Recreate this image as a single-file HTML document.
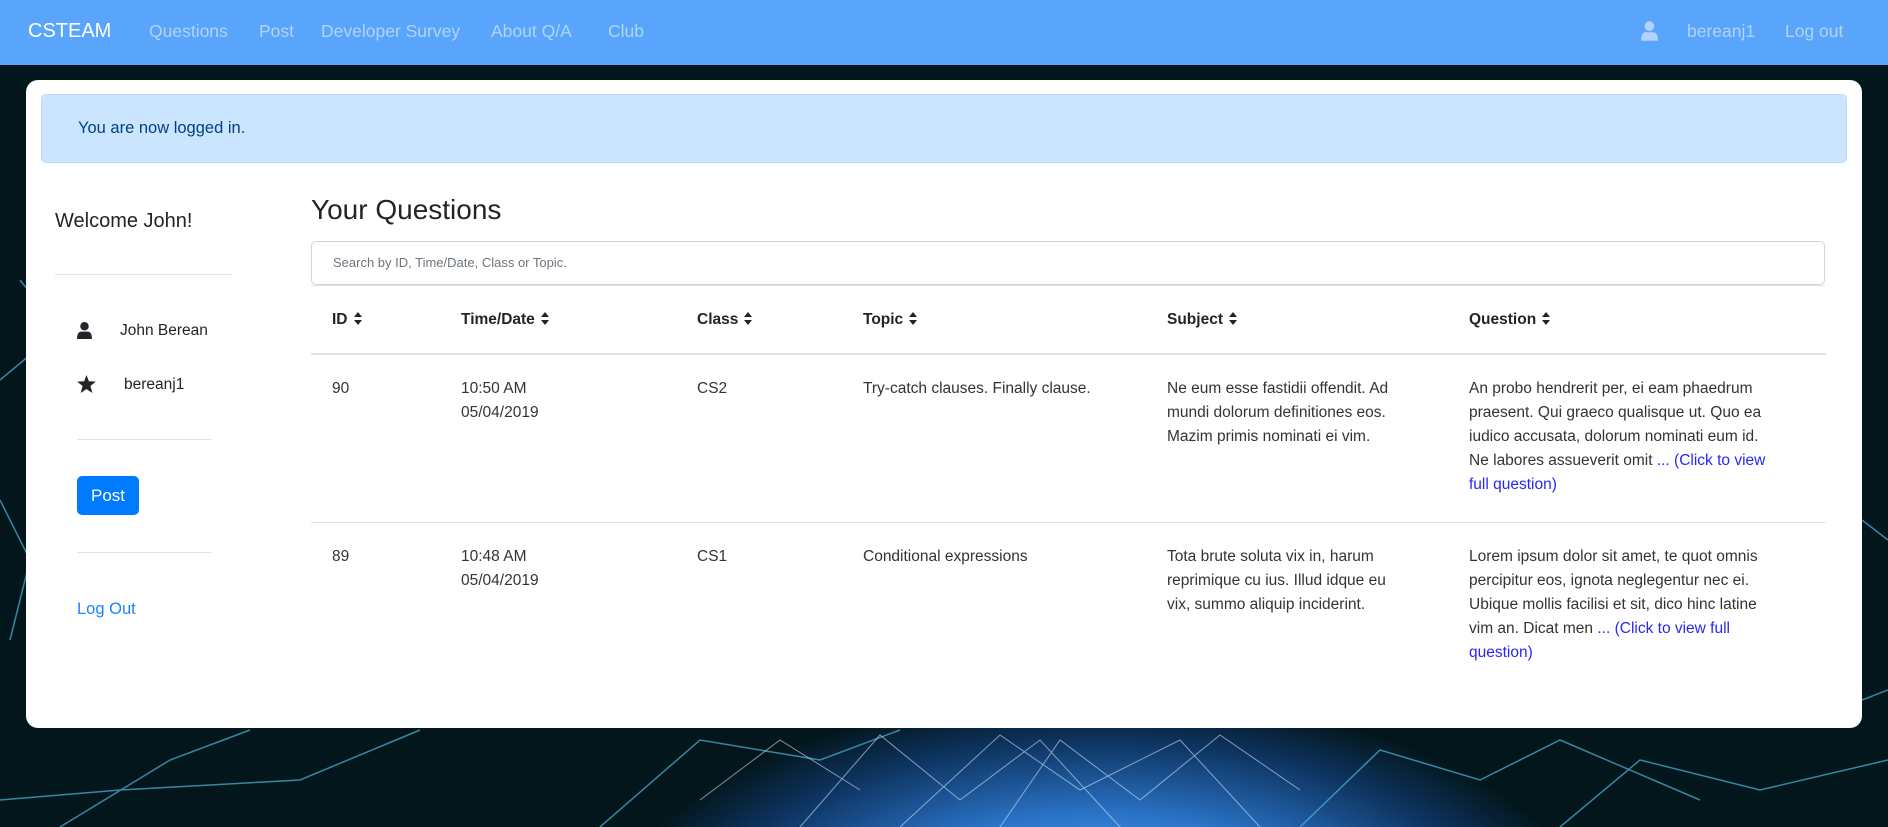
<!DOCTYPE html>
<html><head><meta charset="utf-8"><style>
*{box-sizing:border-box;margin:0;padding:0}
html,body{width:1888px;height:827px;overflow:hidden}
body{position:relative;background:#03161b;font-family:"Liberation Sans",sans-serif;color:#212529}
.bg{position:absolute;left:0;top:0;width:1888px;height:827px}
.glow{position:absolute;left:450px;top:690px;width:1300px;height:137px;background:radial-gradient(ellipse 650px 300px at 50% 230px,#6fb3f2 0%,#2b74c8 35%,rgba(20,70,140,0.6) 60%,rgba(3,22,27,0) 75%)}
.nav{position:absolute;left:0;top:0;width:1888px;height:65px;background:#5aa5fc}
.nav span{position:absolute;top:21px;font-size:17.5px;color:#b0d4fd;white-space:nowrap}
.nav .brand{left:28px;top:20px;font-size:20px;color:#fff}
.card{position:absolute;left:26px;top:80px;width:1836px;height:648px;background:#fff;border-radius:12px}
.alert{position:absolute;left:41px;top:94px;width:1806px;height:69px;background:#cce5ff;border:1px solid #b8daff;border-radius:5px}
.alert span{position:absolute;left:36px;top:24px;font-size:16.5px;color:#004085}
.t{position:absolute;white-space:nowrap;font-size:15.5px;line-height:24px;color:#333}
.hr{position:absolute;height:1px;background:#e2e2e2}
.b{font-weight:bold;color:#212529}
a{color:#2727f5;text-decoration:none}
.srt{display:inline-block;vertical-align:-1px;margin-left:6px}
</style></head><body>
<div class="glow"></div>
<svg class="bg" viewBox="0 0 1888 827">
<g stroke="#4fb6e0" stroke-width="1.5" opacity="0.7" fill="none">
<path d="M0 800 L120 790 L300 780 L420 730"/><path d="M60 827 L170 760 L250 730"/><path d="M0 380 L60 330 L20 280"/><path d="M0 500 L30 560 L10 640"/><path d="M1862 520 L1888 540"/><path d="M1862 700 L1888 690"/>
<path d="M600 827 L700 740 L820 760 L900 730"/><path d="M1300 827 L1380 750 L1480 780 L1560 740 L1700 800"/><path d="M1560 827 L1640 760 L1760 790 L1888 760"/>
</g>
<g stroke="#cfe8ff" stroke-width="1" opacity="0.6" fill="none"><path d="M800 827 L880 735 L960 800 L1040 740 L1120 827 M900 827 L1000 735 L1080 790 L1180 740 L1260 827 M700 800 L780 740 L860 790 M1000 827 L1060 740 L1140 800 L1220 735 L1300 790"/></g>
</svg>
<div class="nav">
<span class="brand">CSTEAM</span>
<span style="left:149px">Questions</span>
<span style="left:259px">Post</span>
<span style="left:321px">Developer Survey</span>
<span style="left:491px">About Q/A</span>
<span style="left:608px">Club</span>
<svg style="position:absolute;left:1641px;top:21px" width="17" height="20" viewBox="0 0 14 16"><circle cx="7" cy="4" r="4" fill="#b0d4fd"/><path d="M0 16 Q0 9 4 9 L10 9 Q14 9 14 16 Z" fill="#b0d4fd"/></svg>
<span style="left:1687px">bereanj1</span>
<span style="left:1785px">Log out</span>
</div>
<div class="card"></div>
<div class="alert"><span>You are now logged in.</span></div>
<div class="t" style="left:55px;top:208px;font-size:20px;line-height:26px;color:#212529">Welcome John!</div>
<div class="hr" style="left:55px;top:274px;width:177px"></div>
<svg style="position:absolute;left:77px;top:322px" width="15" height="17" viewBox="0 0 14 16"><circle cx="7" cy="4" r="4" fill="#212529"/><path d="M0 16 Q0 9 4 9 L10 9 Q14 9 14 16 Z" fill="#212529"/></svg>
<div class="t" style="left:120px;top:319px;color:#212529">John Berean</div>
<svg style="position:absolute;left:77px;top:375px" width="19" height="18" viewBox="0 0 24 23"><path d="M12 0 L15 8 L24 8.5 L17 14 L19.5 23 L12 18 L4.5 23 L7 14 L0 8.5 L9 8 Z" fill="#212529"/></svg>
<div class="t" style="left:124px;top:373px;color:#212529">bereanj1</div>
<div class="hr" style="left:77px;top:439px;width:135px"></div>
<div style="position:absolute;left:77px;top:476px;width:62px;height:39px;background:#007bff;border-radius:5px;color:#fff;font-size:17px;line-height:39px;text-align:center">Post</div>
<div class="hr" style="left:77px;top:552px;width:135px"></div>
<div class="t" style="left:77px;top:597px;font-size:16.5px;color:#1a82ff">Log Out</div>
<div class="t" style="left:311px;top:193px;font-size:28px;line-height:34px;color:#212529">Your Questions</div>
<div style="position:absolute;left:311px;top:241px;width:1514px;height:44px;border:1px solid #ced4da;border-radius:5px"></div>
<div class="t" style="left:333px;top:251px;font-size:13px;color:#6c757d">Search by ID, Time/Date, Class or Topic.</div>
<div class="hr" style="left:311px;top:285px;width:1514px;background:#e2e5e8"></div>
<div class="t b" style="left:332px;top:308px">ID<svg class="srt" width="8" height="13" viewBox="0 0 8 13"><path d="M4 0 L8 5 L0 5Z M4 13 L8 8 L0 8Z" fill="#212529"/></svg></div>
<div class="t b" style="left:461px;top:308px">Time/Date<svg class="srt" width="8" height="13" viewBox="0 0 8 13"><path d="M4 0 L8 5 L0 5Z M4 13 L8 8 L0 8Z" fill="#212529"/></svg></div>
<div class="t b" style="left:697px;top:308px">Class<svg class="srt" width="8" height="13" viewBox="0 0 8 13"><path d="M4 0 L8 5 L0 5Z M4 13 L8 8 L0 8Z" fill="#212529"/></svg></div>
<div class="t b" style="left:863px;top:308px">Topic<svg class="srt" width="8" height="13" viewBox="0 0 8 13"><path d="M4 0 L8 5 L0 5Z M4 13 L8 8 L0 8Z" fill="#212529"/></svg></div>
<div class="t b" style="left:1167px;top:308px">Subject<svg class="srt" width="8" height="13" viewBox="0 0 8 13"><path d="M4 0 L8 5 L0 5Z M4 13 L8 8 L0 8Z" fill="#212529"/></svg></div>
<div class="t b" style="left:1469px;top:308px">Question<svg class="srt" width="8" height="13" viewBox="0 0 8 13"><path d="M4 0 L8 5 L0 5Z M4 13 L8 8 L0 8Z" fill="#212529"/></svg></div>
<div class="hr" style="left:311px;top:353px;width:1515px;height:2px;background:#dee2e6"></div>
<div class="t" style="left:332px;top:377px">90</div>
<div class="t" style="left:461px;top:377px">10:50 AM<br>05/04/2019</div>
<div class="t" style="left:697px;top:377px">CS2</div>
<div class="t" style="left:863px;top:377px">Try-catch clauses. Finally clause.</div>
<div class="t" style="left:1167px;top:377px">Ne eum esse fastidii offendit. Ad<br>mundi dolorum definitiones eos.<br>Mazim primis nominati ei vim.</div>
<div class="t" style="left:1469px;top:377px">An probo hendrerit per, ei eam phaedrum<br>praesent. Qui graeco qualisque ut. Quo ea<br>iudico accusata, dolorum nominati eum id.<br>Ne labores assueverit omit <a>... (Click to view</a><br><a>full question)</a></div>
<div class="hr" style="left:311px;top:522px;width:1515px;background:#dee2e6"></div>
<div class="t" style="left:332px;top:545px">89</div>
<div class="t" style="left:461px;top:545px">10:48 AM<br>05/04/2019</div>
<div class="t" style="left:697px;top:545px">CS1</div>
<div class="t" style="left:863px;top:545px">Conditional expressions</div>
<div class="t" style="left:1167px;top:545px">Tota brute soluta vix in, harum<br>reprimique cu ius. Illud idque eu<br>vix, summo aliquip inciderint.</div>
<div class="t" style="left:1469px;top:545px">Lorem ipsum dolor sit amet, te quot omnis<br>percipitur eos, ignota neglegentur nec ei.<br>Ubique mollis facilisi et sit, dico hinc latine<br>vim an. Dicat men <a>... (Click to view full</a><br><a>question)</a></div>
</body></html>
